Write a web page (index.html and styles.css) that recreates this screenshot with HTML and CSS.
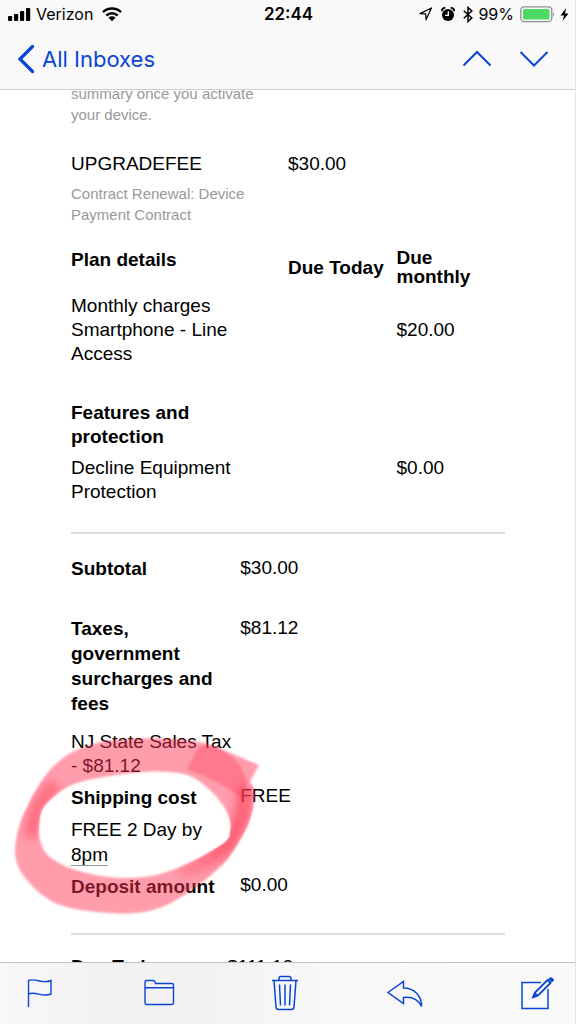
FILE: index.html
```html
<!DOCTYPE html>
<html lang="en">
<head>
<meta charset="utf-8">
<meta name="viewport" content="width=device-width, initial-scale=1">
<title>Mail</title>
<link rel="stylesheet" href="styles.css">
</head>
<body class="app">
<header class="topbar">
  <div class="status">
    <div class="status-side">
      <svg class="icon" width="23" height="16" viewBox="0 0 23 16" aria-hidden="true"><rect x="0" y="10" width="4.200" height="5" rx="1"/><rect x="6" y="8" width="4.200" height="7" rx="1"/><rect x="12" y="5" width="4.200" height="10" rx="1"/><rect x="18" y="2" width="4.200" height="13" rx="1"/></svg>
      <span class="carrier">Verizon</span>
      <svg class="icon wifi" width="20" height="15" viewBox="0 0 20 15" aria-hidden="true"><g fill="none" stroke="#000" stroke-width="2.5"><path d="M1 5.2A13 13 0 0 1 19 5.2"/><path d="M4.300 8.600A8.300 8.300 0 0 1 15.700 8.600"/></g><path d="M6.500 10.800A5 5 0 0 1 13.500 10.800L10 14.300Z"/></svg>
    </div>
    <time class="clock">22:44</time>
    <div class="status-side status-right">
      <div class="indicators">
        <svg class="icon" width="14" height="14" viewBox="0 0 14 14" aria-hidden="true"><path d="M1 6.600L12.500 1L7 12.800L6.700 6.900Z" fill="none" stroke="#000" stroke-width="1.200" stroke-linejoin="round"/></svg>
        <svg class="icon" width="14" height="15" viewBox="0 0 14 15" aria-hidden="true"><circle cx="7" cy="8" r="6"/><path d="M.8 4.200A3 3 0 0 1 4.300 1M13.200 4.200A3 3 0 0 0 9.700 1" fill="none" stroke="#000" stroke-width="1.800"/><path d="M7.300 4.300V8.300H4" fill="none" stroke="#fff" stroke-width="1.300"/></svg>
        <svg class="icon" width="10" height="17" viewBox="0 0 10 17" aria-hidden="true"><path d="M.8 4.800L8.800 12L5 15.500V1.500L8.800 5L.8 12.200" fill="none" stroke="#000" stroke-width="1.500"/></svg>
      </div>
      <span class="percent">99%</span>
      <svg class="icon" width="36" height="17" viewBox="0 0 36 17" aria-hidden="true"><rect x="1.800" y=".8" width="31" height="14.800" rx="3.500" fill="none" stroke="#8e8e8e" stroke-width="1.300"/><rect x="4" y="3" width="26.600" height="10.400" rx="1.500" fill="#4cd964"/><path d="M34.200 6Q36.200 8 34.200 10.500Z" fill="#8e8e8e"/></svg>
      <svg class="icon" width="9" height="15" viewBox="0 0 9 15" aria-hidden="true"><path d="M6.200 1L.5 8.500H4L2.600 14L8.500 6.500H5Z"/></svg>
    </div>
  </div>
  <nav class="nav" aria-label="Message">
    <a class="back" href="#inboxes"><svg width="18" height="30" viewBox="0 0 18 30" aria-hidden="true"><path d="M15.500 2.500L3 15L15.500 27.500" fill="none" stroke="currentColor" stroke-width="3.300" stroke-linecap="round"/></svg>All Inboxes</a>
    <div class="steps">
      <button class="plain" aria-label="Previous message"><svg width="30" height="18" viewBox="0 0 30 18"><path d="M1.500 15.500L15 2L28.500 15.500" fill="none" stroke="currentColor" stroke-width="2"/></svg></button>
      <button class="plain" aria-label="Next message"><svg width="30" height="18" viewBox="0 0 30 18"><path d="M1.500 2L15 15.500L28.500 2" fill="none" stroke="currentColor" stroke-width="2"/></svg></button>
    </div>
  </nav>
</header>

<main class="viewport">
  <article class="message">
    <p class="note intro">summary once you activate your device.</p>
    <table class="plan">
      <tbody>
        <tr><td>UPGRADEFEE</td><td>$30.00</td><td></td></tr>
        <tr class="note-row"><td><p class="note">Contract Renewal: Device Payment Contract</p></td><td></td><td></td></tr>
        <tr class="heads"><th class="top">Plan details</th><th>Due Today</th><th>Due monthly</th></tr>
        <tr class="charges"><td>Monthly charges<br>Smartphone - Line Access</td><td></td><td>$20.00</td></tr>
        <tr class="features"><th>Features and protection</th><td></td><td></td></tr>
        <tr class="decline"><td>Decline Equipment Protection</td><td></td><td class="top">$0.00</td></tr>
      </tbody>
    </table>
    <hr class="rule">
    <table class="totals">
      <tbody>
        <tr class="subtotal"><th>Subtotal</th><td>$30.00</td></tr>
        <tr class="taxes"><th>Taxes, government surcharges and fees</th><td>$81.12</td></tr>
        <tr class="state-tax"><td>NJ State Sales Tax - $81.12</td><td></td></tr>
        <tr class="shipping"><th>Shipping cost</th><td>FREE</td></tr>
        <tr class="speed"><td>FREE 2 Day by <span class="detected">8pm</span></td><td></td></tr>
        <tr class="deposit"><th>Deposit amount</th><td>$0.00</td></tr>
      </tbody>
    </table>
    <hr class="rule">
    <div class="due"><b>Due Today</b><span>$111.12</span></div>
  </article>
  <svg class="marker" width="260" height="190" viewBox="5 732 260 190" aria-hidden="true">
    <defs>
      <linearGradient id="fade" gradientUnits="userSpaceOnUse" x1="0" y1="745" x2="0" y2="885"><stop offset="0" stop-color="#ff354f" stop-opacity=".5"/><stop offset=".75" stop-color="#ff354f" stop-opacity=".6"/><stop offset="1" stop-color="#ff354f" stop-opacity="0"/></linearGradient>
      <filter id="soft" x="-50%" y="-20%" width="200%" height="140%"><feGaussianBlur stdDeviation="4"/></filter>
      <filter id="edge"><feGaussianBlur stdDeviation="1"/></filter>
      <clipPath id="band"><path clip-rule="evenodd" d="M15 850C16 833 21 818 27 807C33 794 41 780 50 770C58 761 67 754 77 750C90 744 105 740 117 740C145 737 175 738 200 742C208 744 216 747 223 750L259 765L250 782C256 789 255 797 254 802C253 811 250 820 247 827C241 839 234 851 227 860C216 872 201 884 187 893C176 901 164 907 153 910C139 914 124 914 110 913C92 912 75 910 60 905C47 900 35 890 27 880C18 870 15 860 15 850ZM40 817C39 826 38 834 40 840C42 847 45 853 50 857C60 865 73 870 87 873C105 878 126 879 143 877C156 876 168 872 180 867C192 862 203 856 213 850C222 845 231 839 230 833C231 828 231 824 230 820C227 810 221 801 213 793C203 783 192 775 180 773C164 771 148 771 133 773C113 775 94 778 77 783C66 787 57 793 50 800C44 805 41 811 40 817Z"/></clipPath>
    </defs>
    <path filter="url(#edge)" fill="#ff354f" fill-opacity=".48" fill-rule="evenodd" d="M15 850C16 833 21 818 27 807C33 794 41 780 50 770C58 761 67 754 77 750C90 744 105 740 117 740C145 737 175 738 200 742C208 744 216 747 223 750L259 765L250 782C256 789 255 797 254 802C253 811 250 820 247 827C241 839 234 851 227 860C216 872 201 884 187 893C176 901 164 907 153 910C139 914 124 914 110 913C92 912 75 910 60 905C47 900 35 890 27 880C18 870 15 860 15 850ZM40 817C39 826 38 834 40 840C42 847 45 853 50 857C60 865 73 870 87 873C105 878 126 879 143 877C156 876 168 872 180 867C192 862 203 856 213 850C222 845 231 839 230 833C231 828 231 824 230 820C227 810 221 801 213 793C203 783 192 775 180 773C164 771 148 771 133 773C113 775 94 778 77 783C66 787 57 793 50 800C44 805 41 811 40 817Z"/>
    <path filter="url(#edge)" fill="#ff354f" fill-opacity=".34" d="M187 769L198 748C208 741 224 749 233 758C241 766 245 773 247 781L243 799C227 786 206 776 187 769Z"/>
    <g clip-path="url(#band)">
      <path filter="url(#soft)" fill="none" stroke="url(#fade)" stroke-width="16" d="M244 787C246 810 238 832 222 850C209 861 196 869 180 876"/>
      <path filter="url(#soft)" fill="none" stroke="#ff354f" stroke-opacity=".45" stroke-width="14" d="M32 838C30 822 38 801 56 784"/>
    </g>
  </svg>
</main>

<footer class="toolbar">
  <button class="plain" aria-label="Flag"><svg width="28" height="32" viewBox="0 0 28 32"><path d="M3.500 29V2.500C11 -.5 17 6.500 26 2.500V16C17 20 11 12.500 3.500 16" fill="none" stroke="currentColor" stroke-width="1.400"/></svg></button>
  <button class="plain" aria-label="Move to folder"><svg width="32" height="32" viewBox="0 0 32 32"><path d="M2 9V4Q2 2.500 3.500 2.500H10.500Q11.500 2.500 12 4L12.500 5.500H29Q30.500 5.500 30.500 7V24.500Q30.500 26.500 28.500 26.500H4Q2 26.500 2 24.500V9.800H30.500" fill="none" stroke="currentColor" stroke-width="1.400"/></svg></button>
  <button class="plain" aria-label="Delete"><svg width="28" height="38" viewBox="0 0 28 38"><path d="M1 5.500H27M8 5.500V3.500Q8 1.500 10 1.500H18Q20 1.500 20 3.500V5.500M3 5.500L5 32Q5.200 34.500 7.500 34.500H20.500Q22.800 34.500 23 32L25 5.500M8.500 9.500L9.500 30.500M14 9.500V30.500M19.500 9.500L18.500 30.500" fill="none" stroke="currentColor" stroke-width="1.500"/></svg></button>
  <button class="plain" aria-label="Reply"><svg width="38" height="30" viewBox="0 0 38 30"><path d="M2 13.500L17.500 2.500V9C28 9 36 17 35.500 27.500C32 20 26 17.500 17.500 18.500V24.500Z" fill="none" stroke="currentColor" stroke-width="1.500"/></svg></button>
  <button class="plain compose" aria-label="Compose"><svg width="34" height="34" viewBox="0 0 34 34"><path d="M20 5.500H1V31.500H27V12" fill="none" stroke="currentColor" stroke-width="1.500"/><path d="M12 20.300L14 15.500L26.500 3L29.500 6L17 18.500Z" fill="none" stroke="currentColor" stroke-width="1.800"/><path d="M11.500 21L17 18.500L14 15.500ZM27.500 2L29.500 .8Q32.500 .8 32.500 3.500L30.500 5Z" fill="currentColor" stroke="currentColor"/></svg></button>
</footer>
</body>
</html>
```
FILE: styles.css
```css
* {
  box-sizing: border-box;
}

.app {
  display: flex;
  flex-direction: column;
  height: 100vh;
  margin: 0;
  border-right: 1px solid #e2e2e3;
  background: #fff;
  color: #000;
  font-family: "Liberation Sans", Arial, sans-serif;
  font-size: 19px;
  line-height: 24px;
  overflow: hidden;
}

.topbar {
  flex: none;
  border-bottom: 1px solid #cfcfd1;
  background: #f9f9f9;
  font-family: Inter, sans-serif;
}

.status {
  display: grid;
  grid-template-columns: 1fr auto 1fr;
  align-items: center;
  height: 28px;
  padding: 0 6px 0 8px;
  font-size: 16px;
}

.status-side {
  display: flex;
  align-items: center;
  gap: 5px;
}

.status-right {
  justify-content: flex-end;
}

.indicators {
  display: flex;
  align-items: center;
  gap: 8px;
}

.wifi {
  margin-left: 4px;
}

.icon {
  flex: none;
}

.clock {
  font-size: 17px;
  font-weight: 600;
}

.nav {
  display: flex;
  align-items: center;
  justify-content: space-between;
  height: 61px;
  padding: 0 26px 0 17px;
}

.back {
  display: flex;
  align-items: center;
  gap: 7px;
  color: #0b45d6;
  font-size: 22px;
  text-decoration: none;
}

.steps {
  display: flex;
  gap: 27px;
}

.plain {
  display: flex;
  padding: 0;
  border: 0;
  background: none;
  color: #0b45d6;
}

.viewport {
  position: relative;
  flex: 1;
  min-height: 0;
  overflow: hidden;
}

.message {
  margin-top: -7px;
  padding: 0 70px 0 71px;
}

.note {
  margin: 0;
  color: #999;
  font-size: 15px;
  line-height: 21px;
}

.intro {
  width: 50%;
  padding-right: 20px;
}

.plan,
.totals {
  width: 100%;
  border-collapse: collapse;
  table-layout: fixed;
}

.plan {
  margin-top: 27px;
}

.plan td,
.plan th,
.totals td,
.totals th {
  padding: 0;
  text-align: left;
  vertical-align: top;
}

.plan td:first-child {
  width: 50%;
}

.plan td:first-child,
.plan th:first-child {
  padding-right: 20px;
}

.plan .note-row td {
  padding-top: 7px;
}

.plan .heads th {
  padding-top: 23px;
  line-height: 19px;
  vertical-align: middle;
}

.plan .heads .top {
  line-height: 24px;
  vertical-align: top;
}

.plan .charges td {
  padding-top: 8px;
  vertical-align: middle;
}

.plan .features th {
  padding-top: 35px;
}

.plan .decline td {
  padding-top: 7px;
}

.rule {
  height: 2px;
  margin: 28px 0 0;
  border: 0;
  background: #dcdcdc;
}

.totals {
  margin-top: 22px;
}

.totals th {
  width: 39%;
  line-height: 25px;
}

.totals .taxes th,
.totals .taxes td {
  padding-top: 35px;
}

.totals .state-tax td {
  padding-top: 14px;
}

.totals .shipping th,
.totals .speed td,
.totals .deposit th {
  padding-top: 7px;
}

.totals .shipping td,
.totals .deposit td {
  padding-top: 6px;
}

.totals .speed td {
  line-height: 25px;
}

.detected {
  border-bottom: 1px solid #999;
}

.totals + .rule {
  margin-top: 34px;
}

.due {
  display: grid;
  grid-template-columns: 36% 1fr;
  margin-top: 20px;
}

.marker {
  position: absolute;
  top: 642px;
  left: 5px;
  pointer-events: none;
}

.toolbar {
  display: grid;
  flex: none;
  grid-template-columns: 79fr 161fr 90fr 151fr 95fr;
  align-items: center;
  justify-items: center;
  height: 62px;
  border-top: 1px solid #c4c4c6;
  background: linear-gradient(90deg, #f8f8f8, #f2f2f3 18%, #f2f2f3 34%, #f8f8f9 56%, #f9f9f9);
}

.compose {
  justify-self: end;
  margin-right: 20px;
}
```
